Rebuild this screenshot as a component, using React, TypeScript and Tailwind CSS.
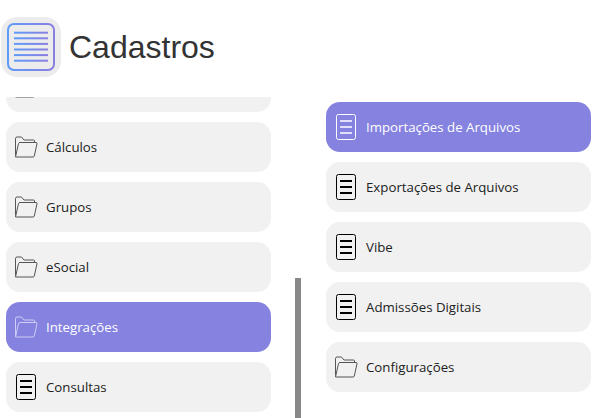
const FolderIcon = ({ color = "#555" }: { color?: string }) => (
  <svg width="24" height="22" viewBox="0 0 24 22" fill="none" stroke={color} strokeWidth="1" strokeLinejoin="round" className="ml-[-1px]">
    <path d="M1.5 19.5V2.5Q1.5 1 3 1H7.5L10 4H19.5Q20.5 4 20.5 5V6.5" />
    <path d="M1.5 21L4.5 7.5Q4.8 6.5 6 6.5H22Q23.3 6.5 23 7.7L20.3 20Q20 21 19 21Z" />
  </svg>
)

const DocIcon = ({ color = "#000", thick = true }: { color?: string; thick?: boolean }) => (
  <svg width="20" height="26" viewBox="0 0 20 26" fill="none" stroke={color} className="ml-px">
    <rect x="0.5" y="0.5" width="19" height="25" rx="2" strokeWidth="1" />
    <path d="M4 7H16M4 13H16M4 19H16" strokeWidth={thick ? 2 : 1.5} />
  </svg>
)

const HeaderIcon = () => (
  <div className="w-[60px] h-[60px] rounded-[16px] bg-[#ececec] flex items-center justify-center">
    <svg width="48" height="48" viewBox="0 0 48 48" fill="none">
      <defs>
        <linearGradient id="hdr" x1="0" y1="0" x2="1" y2="0">
          <stop offset="0" stopColor="#5f9bfa" />
          <stop offset="1" stopColor="#8a7fe0" />
        </linearGradient>
      </defs>
      <rect x="1" y="1" width="46" height="46" rx="6" stroke="url(#hdr)" strokeWidth="2" />
      <g fill="url(#hdr)">
        <rect x="7" y="8.7" width="34" height="2" />
        <rect x="7" y="14.3" width="34" height="2" />
        <rect x="7" y="19.9" width="34" height="2" />
        <rect x="7" y="25.5" width="34" height="2" />
        <rect x="7" y="31.1" width="34" height="2" />
        <rect x="7" y="36.7" width="34" height="2" />
      </g>
    </svg>
  </div>
)

const MenuItem = ({ label, icon, active }: { label?: string; icon: "folder" | "doc"; active?: boolean }) => (
  <div
    className={
      "h-[50px] shrink-0 rounded-[14px] flex items-center pl-[9px] " +
      (active ? "bg-[#8582e0] text-white" : "bg-[#f1f1f1] text-[#222]")
    }
  >
    <div className="w-[31px] flex items-center">
      {icon === "folder" ? (
        <FolderIcon color={active ? "#cfcdf3" : "#555"} />
      ) : (
        <DocIcon color={active ? "#fff" : "#000"} thick={!active} />
      )}
    </div>
    {label && <span className="text-[13.25px] leading-[20px] mb-px">{label}</span>}
  </div>
)

export default function App() {
  return (
    <div className="w-[616px] h-[418px] overflow-hidden bg-white font-['Open_Sans','Noto_Sans',sans-serif]">
      <div className="h-[97px] flex items-start pt-[17px] pl-px">
        <HeaderIcon />
        <h1 className="ml-[8px] mt-[9px] text-[32px] leading-[42px] text-[#333] font-['Liberation_Sans',sans-serif]">Cadastros</h1>
      </div>
      <div className="flex h-[321px]">
        <div className="w-[265px] ml-[6px] h-full overflow-hidden">
          <div className="flex flex-col gap-[10px] mt-[-35px]">
            <MenuItem icon="folder" />
            <MenuItem icon="folder" label="Cálculos" />
            <MenuItem icon="folder" label="Grupos" />
            <MenuItem icon="folder" label="eSocial" />
            <MenuItem icon="folder" label="Integrações" active />
            <MenuItem icon="doc" label="Consultas" />
          </div>
        </div>
        <div className="w-[6px] h-[140px] ml-[24px] mt-[181px] bg-[#888]" />
        <div className="w-[265px] ml-[25px] pt-[5px] flex flex-col gap-[10px]">
          <MenuItem icon="doc" label="Importações de Arquivos" active />
          <MenuItem icon="doc" label="Exportações de Arquivos" />
          <MenuItem icon="doc" label="Vibe" />
          <MenuItem icon="doc" label="Admissões Digitais" />
          <MenuItem icon="folder" label="Configurações" />
        </div>
      </div>
    </div>
  )
}
